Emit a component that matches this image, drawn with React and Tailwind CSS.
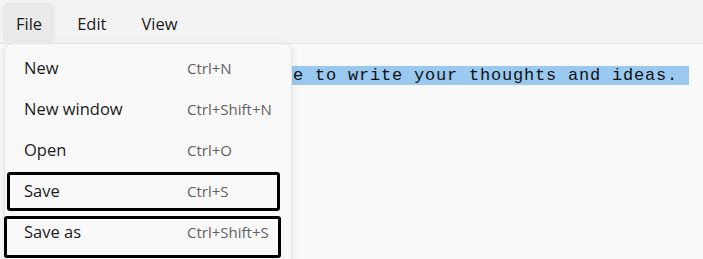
import React from "react";

const items = [
  ["New", "Ctrl+N"],
  ["New window", "Ctrl+Shift+N"],
  ["Open", "Ctrl+O"],
  ["Save", "Ctrl+S"],
  ["Save as", "Ctrl+Shift+S"],
];

export default function App() {
  return (
    <div
      className="relative w-[703px] h-[259px] overflow-hidden bg-[#f3f3f3] flex flex-col"
      style={{ fontFamily: '"Open Sans", "Noto Sans", sans-serif' }}
    >
      <div className="h-[43px] flex items-start pt-[3px] pl-[3px] gap-[9px] text-[16.5px] text-[#1b1b1b]">
        <div className="h-[39px] px-[13px] pt-[3px] flex items-center rounded-[5px] bg-[#eaeaea]">File</div>
        <div className="h-[39px] px-[13px] pt-[3px] flex items-center">Edit</div>
        <div className="h-[39px] px-[13px] pt-[3px] flex items-center">View</div>
      </div>
      <div className="flex-1 border-t border-[#e6e6e6] bg-[#f9f9f9] pt-[23px] pl-[150px]">
        <div
          className="text-[17px] leading-[18px] tracking-[0.8px] text-[#111] whitespace-pre"
          style={{ fontFamily: '"Liberation Mono", monospace' }}
        >
          <span className="bg-[#99c9ef]">Use this space to write your thoughts and ideas. </span>
        </div>
      </div>

      <div className="absolute left-[4px] top-[43px] w-[288px] h-[230px] rounded-[8px] border border-[#e3e3e3] bg-[#f9f9f9] shadow-[0_2px_8px_rgba(0,0,0,0.08)] pt-[4px]">
        {items.map(([label, sc]) => (
          <div key={label} className="h-[41px] flex items-center pl-[19px]">
            <span className="w-[163px] text-[16.5px] text-[#1b1b1b]">{label}</span>
            <span className="text-[15px] text-[#626262]">{sc}</span>
          </div>
        ))}
        <div className="absolute left-[2px] top-[128px] w-[273px] h-[39px] border-[3px] border-black rounded-[3px]" />
        <div className="absolute left-[-1px] top-[172px] w-[277px] h-[42px] border-[3px] border-black rounded-[3px]" />
      </div>
    </div>
  );
}
